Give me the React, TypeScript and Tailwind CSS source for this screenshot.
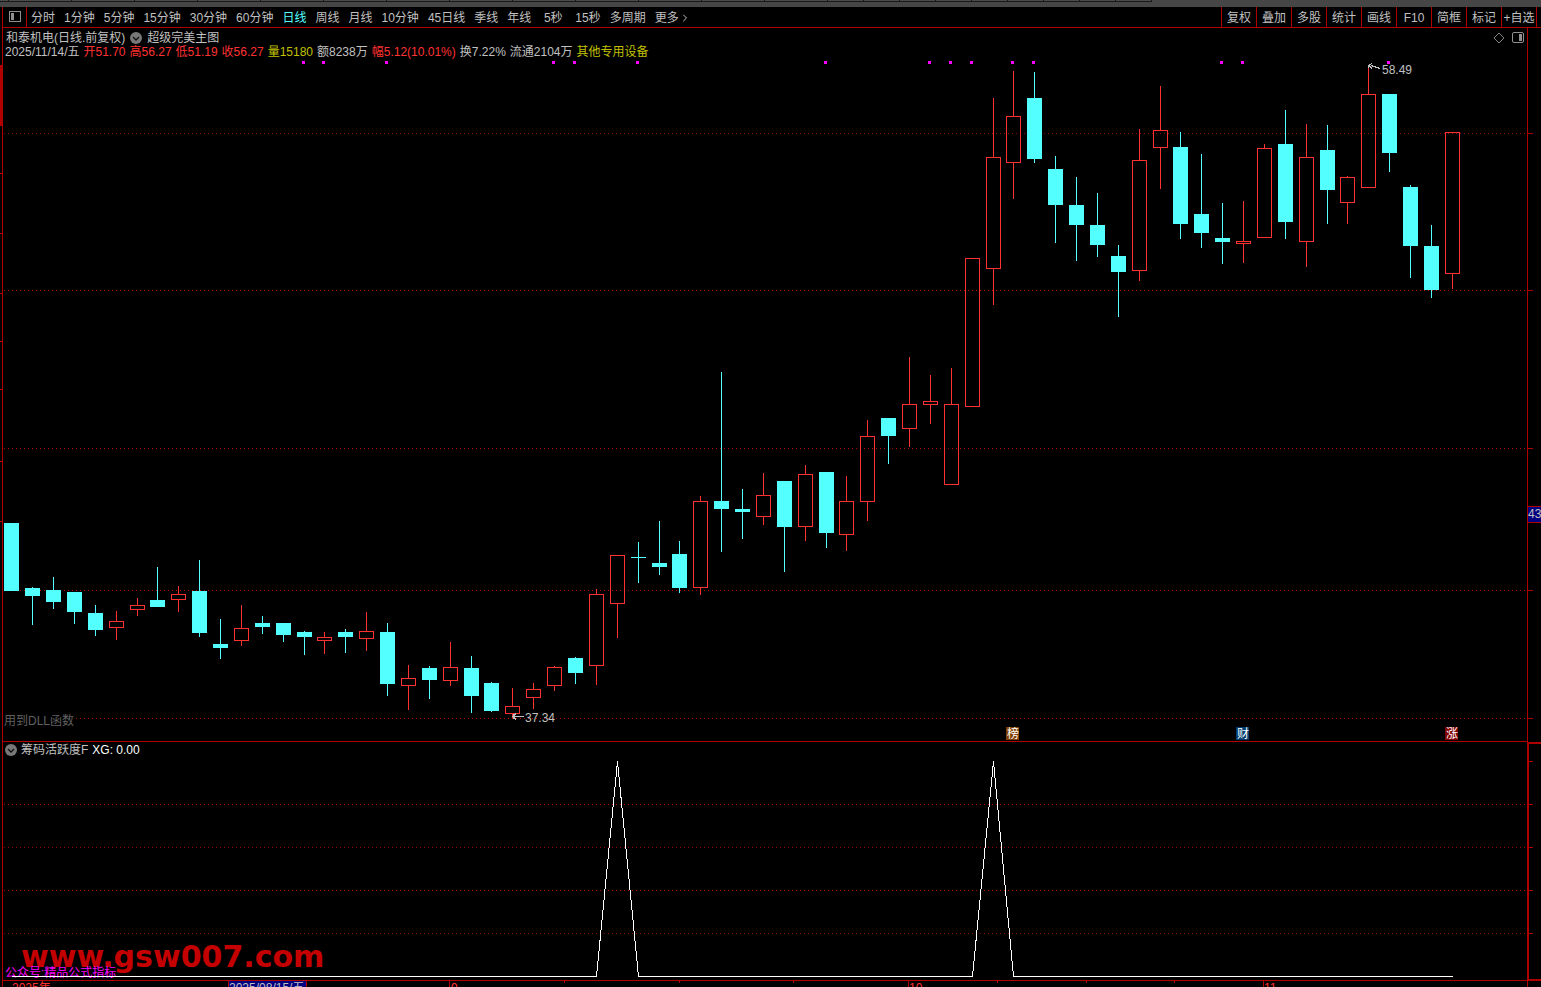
import { ChevronRight } from 'lucide-react'

type Candle = [high: number, top: number, bottom: number, low: number, up?: 1]

// pixel rows of every daily bar, 1 at the end marks a rising (hollow) bar
const CANDLES: Candle[] = [
  [523, 523, 591, 591],
  [587, 588, 596, 625],
  [577, 590, 602, 609],
  [592, 592, 612, 624],
  [605, 613, 630, 636],
  [611, 621, 628, 640, 1],
  [598, 605, 610, 616, 1],
  [567, 600, 607, 607],
  [586, 594, 600, 612, 1],
  [560, 591, 633, 637],
  [619, 644, 648, 659],
  [605, 628, 641, 646, 1],
  [616, 623, 627, 634],
  [623, 623, 635, 642],
  [631, 632, 637, 655],
  [632, 637, 641, 654, 1],
  [629, 632, 637, 653],
  [612, 631, 639, 651, 1],
  [623, 632, 684, 696],
  [665, 678, 686, 710, 1],
  [666, 668, 680, 699],
  [642, 667, 681, 686, 1],
  [656, 668, 696, 713],
  [682, 683, 711, 712],
  [688, 706, 714, 718, 1],
  [683, 689, 698, 709, 1],
  [666, 667, 686, 691, 1],
  [657, 658, 673, 684],
  [589, 594, 666, 685, 1],
  [555, 555, 604, 638, 1],
  [542, 557, 558, 583],
  [521, 563, 567, 575],
  [541, 554, 588, 593],
  [496, 501, 588, 595, 1],
  [372, 501, 509, 552],
  [489, 509, 512, 539],
  [473, 495, 517, 525, 1],
  [481, 481, 527, 572],
  [465, 474, 527, 541, 1],
  [472, 472, 533, 548],
  [476, 501, 535, 551, 1],
  [420, 436, 502, 521, 1],
  [418, 418, 436, 464],
  [357, 404, 429, 447, 1],
  [375, 401, 405, 424, 1],
  [368, 404, 485, 485, 1],
  [258, 258, 407, 407, 1],
  [98, 157, 269, 305, 1],
  [71, 116, 163, 199, 1],
  [72, 98, 159, 163],
  [156, 169, 205, 243],
  [177, 205, 225, 261],
  [193, 225, 245, 257],
  [245, 256, 272, 317],
  [129, 160, 271, 281, 1],
  [86, 130, 148, 189, 1],
  [132, 147, 224, 239],
  [154, 214, 233, 248],
  [203, 238, 242, 264],
  [201, 241, 244, 263, 1],
  [144, 148, 238, 238, 1],
  [110, 144, 222, 239],
  [124, 157, 242, 267, 1],
  [125, 150, 190, 224],
  [176, 177, 203, 224, 1],
  [67, 94, 188, 188, 1],
  [94, 94, 153, 172],
  [185, 187, 246, 278],
  [225, 246, 290, 298],
  [132, 132, 274, 289, 1],
]

const SIGNALS = [14, 15, 18, 26, 27, 30, 39, 44, 45, 46, 48, 49, 58, 59, 66]

const PERIODS = [
  '分时', '1分钟', '5分钟', '15分钟', '30分钟', '60分钟', '日线', '周线', '月线',
  '10分钟', '45日线', '季线', '年线', '5秒', '15秒', '多周期',
]

const TOOLS = ['复权', '叠加', '多股', '统计', '画线', 'F10', '简框', '标记', '+自选']

const QUOTES = [
  { text: '2025/11/14/五', color: 'text-[#c0c0c0]' },
  { text: '开51.70', color: 'text-[#ff3232]' },
  { text: '高56.27', color: 'text-[#ff3232]' },
  { text: '低51.19', color: 'text-[#ff3232]' },
  { text: '收56.27', color: 'text-[#ff3232]' },
  { text: '量15180', color: 'text-[#c0c000]' },
  { text: '额8238万', color: 'text-[#c0c0c0]' },
  { text: '幅5.12(10.01%)', color: 'text-[#ff3232]' },
  { text: '换7.22%', color: 'text-[#c0c0c0]' },
  { text: '流通2104万', color: 'text-[#c0c0c0]' },
  { text: '其他专用设备', color: 'text-[#c0c000]' },
]

const EVENTS = [
  { x: 1006, label: '榜', fill: '#804000' },
  { x: 1236, label: '财', fill: '#003c70' },
  { x: 1445, label: '涨', fill: '#800000' },
]

const MONTHS = [
  { x: 12, label: '2025年' },
  { x: 451, label: '9' },
  { x: 909, label: '10' },
  { x: 1264, label: '11' },
]

const TOP_TABS = [9, ...Array(13).fill(63), ...Array(9).fill(36)]

const RED = '#b00000'

const barX = (i: number) => Math.floor(11.82 + i * 20.877)

function TopStrip() {
  return (
    <div className="flex h-[7px] shrink-0 overflow-hidden bg-[#464646]">
      {TOP_TABS.map((w, i) => (
        <span
          key={i}
          className="h-[2px] shrink-0 border-r border-b border-[#181818] bg-[#4c4c4c]"
          style={{ width: w }}
        />
      ))}
    </div>
  )
}

function Toolbar() {
  return (
    <nav className="ml-[2px] flex h-[21px] shrink-0 items-stretch border-b border-l border-[#b00000]">
      <button aria-label="侧栏" className="flex w-[23px] shrink-0 items-center justify-center">
        <svg width="12" height="12" viewBox="0 0 12 12" shapeRendering="crispEdges">
          <rect x="0.5" y="0.5" width="11" height="10" rx="1" fill="none" stroke="#909090" />
          <rect x="2" y="2" width="3" height="7" fill="#909090" />
        </svg>
      </button>
      <div className="flex grow items-center gap-[9px] border-l border-[#b00000] pt-px pl-1 whitespace-nowrap">
        {PERIODS.map((p) => (
          <button
            key={p}
            className={`${p === '日线' ? 'text-[#54ffff]' : ''} ${p === '5秒' ? 'min-w-[26px]' : ''}`}
          >
            {p}
          </button>
        ))}
        <button className="flex items-center">
          更多
          <ChevronRight size={12} strokeWidth={2} />
        </button>
      </div>
      <div className="mr-1 flex shrink-0 border-r border-[#b00000]">
        {TOOLS.map((t) => (
          <button
            key={t}
            className="w-[35px] border-l border-[#b00000] pt-px text-center whitespace-nowrap"
          >
            {t}
          </button>
        ))}
      </div>
    </nav>
  )
}

function CollapseIcon() {
  return (
    <svg width="12" height="12" viewBox="0 0 12 12">
      <circle cx="6" cy="6" r="6" fill="#787878" />
      <path d="M3 5l3 3 3-3" fill="none" stroke="#101010" strokeWidth="1.3" />
    </svg>
  )
}

function QuoteHeader() {
  return (
    <header className="mr-[13px] ml-[2px] flex h-[30px] shrink-0 items-start justify-between border-x border-[#b00000] pt-[3px] pr-[3px] pl-[2px]">
      <div className="leading-[14px] whitespace-nowrap">
        <div className="flex items-center gap-[5px] pl-px">
          <h1>和泰机电(日线.前复权)</h1>
          <button aria-label="切换主图">
            <CollapseIcon />
          </button>
          <span>超级完美主图</span>
        </div>
        <div className="flex gap-1">
          {QUOTES.map((q) => (
            <span key={q.text} className={q.color}>
              {q.text}
            </span>
          ))}
        </div>
      </div>
      <div className="flex h-[14px] items-center gap-[7px]">
        <svg width="12" height="12" viewBox="0 0 12 12">
          <path d="M6 1l5 5-5 5-5-5z" fill="none" stroke="#808080" />
        </svg>
        <svg width="12" height="12" viewBox="0 0 12 12">
          <rect x="0.5" y="0.5" width="11" height="10" rx="1.5" fill="none" stroke="#909090" />
          <rect x="7" y="2" width="3" height="7" fill="#909090" />
        </svg>
      </div>
    </header>
  )
}

function GridLine({ y, color = RED }: { y: number; color?: string }) {
  return (
    <g stroke={color}>
      <line x1="4" x2="1527" y1={y + 0.5} y2={y + 0.5} strokeDasharray="1 3" />
      <line x1="1528" x2="1533" y1={y + 0.5} y2={y + 0.5} stroke={RED} />
    </g>
  )
}

function CandleBar({ x, candle }: { x: number; candle: Candle }) {
  const [high, top, bottom, low, up] = candle
  const color = up ? '#ff3232' : '#54ffff'
  return (
    <g fill={color}>
      {top > high && <rect x={x} y={high} width="1" height={top - high} />}
      {low > bottom && <rect x={x} y={bottom} width="1" height={low - bottom} />}
      {up ? (
        <rect
          x={x - 6.5}
          y={top + 0.5}
          width="14"
          height={bottom - top - 1}
          fill="none"
          stroke={color}
        />
      ) : (
        <rect x={x - 7} y={top} width="15" height={bottom - top} />
      )}
    </g>
  )
}

function PriceChart() {
  return (
    <svg viewBox="0 58 1541 684" className="block w-full shrink-0" shapeRendering="crispEdges">
      <g fill={RED}>
        <rect x="2" y="58" width="1" height="684" />
        <rect x="0" y="65" width="3" height="61" />
        {[173, 233, 293, 341, 389, 461, 521].map((y) => (
          <rect key={y} x="0" y={y} width="2" height="1" />
        ))}
        <rect x="1527" y="58" width="1" height="684" />
        <rect x="2" y="741" width="1526" height="1" />
      </g>
      <GridLine y={133} color="#900000" />
      {[290, 448, 590, 718].map((y) => (
        <GridLine key={y} y={y} />
      ))}

      <rect x="0" y="713" width="75" height="14" fill="#000" />
      <rect x="2" y="713" width="1" height="14" fill={RED} />
      <text x="4" y="725" fill="#606060">
        用到DLL函数
      </text>

      {CANDLES.map((c, i) => (
        <CandleBar key={i} x={barX(i)} candle={c} />
      ))}
      {SIGNALS.map((i) => (
        <rect key={i} x={barX(i) - 2} y="61" width="3" height="3" fill="#ff00ff" />
      ))}

      <g fill="none" stroke="#c0c0c0">
        <path d="M1368.5 68V65.5L1372 63.5M1369 65.5l3 3M1371 65.5l9 3" />
        <path d="M512 716.5h12M516 713.5l-3 3 3 3M513.5 714v5" />
      </g>
      <g fill="#c0c0c0">
        <text x="1382" y="74">58.49</text>
        <text x="525" y="722">37.34</text>
      </g>

      {EVENTS.map((e) => (
        <g key={e.label}>
          <rect x={e.x} y="727" width="13" height="13" fill={e.fill} />
          <text x={e.x + 1} y="738" fill="#fff">
            {e.label}
          </text>
        </g>
      ))}

      <rect x="1528" y="506" width="13" height="17" fill={RED} />
      <rect x="1528" y="507" width="13" height="15" fill="#000080" />
      <text x="1528" y="518" fill="#c0c0c0">43</text>
    </svg>
  )
}

function IndicatorHeader() {
  return (
    <div className="ml-[2px] flex h-4 shrink-0 border-l border-[#b00000]">
      <div className="flex grow items-center gap-1 pl-[2px]">
        <button aria-label="切换指标">
          <CollapseIcon />
        </button>
        <h2>筹码活跃度F</h2>
        <span className="text-white">XG: 0.00</span>
      </div>
      <div className="w-[14px] border-t-2 border-l-2 border-[#b00000]" />
    </div>
  )
}

function IndicatorChart() {
  const base = 976.5
  const peak = 761.5
  const points = [0, 28, 29, 30, 46, 47, 48, 69]
    .map((i) => `${barX(i) + 0.5},${i === 29 || i === 47 ? peak : base}`)
    .join(' ')

  return (
    <svg viewBox="0 758 1541 240" className="block w-full shrink-0" shapeRendering="crispEdges">
      <g fill={RED}>
        <rect x="2" y="758" width="1" height="240" />
        <rect x="1527" y="758" width="2" height="223" />
        <rect x="1529" y="761" width="4" height="1" />
        <rect x="2" y="980" width="1539" height="1" />
        <rect x="1527" y="979" width="14" height="2" />
        {[228, 306, 449, 908, 1263, 1527].map((x) => (
          <rect key={x} x={x} y="981" width="1" height="17" />
        ))}
        {[564, 679, 793, 997, 1086, 1174].map((x) => (
          <rect key={x} x={x} y="981" width="1" height="2" />
        ))}
      </g>
      <GridLine y={804} />
      <GridLine y={847} color="#900000" />
      <GridLine y={890} />
      <GridLine y={933} color="#900000" />

      <text x="21" y="967" fill="#c40000" className="font-['DejaVu_Sans'] text-[30px] font-bold">
        www.gsw007.com
      </text>
      <text x="5" y="977" fill="#ff00ff">
        公众号:精品公式指标
      </text>
      <polyline points={points} fill="none" stroke="#fff" />

      {MONTHS.map((m) => (
        <text key={m.x} x={m.x} y="992" fill="#ff3232">
          {m.label}
        </text>
      ))}
      <rect x="229" y="981" width="77" height="17" fill="#000080" />
      <text x="229" y="992" fill="#c0c0c0">
        2025/08/15/五
      </text>
    </svg>
  )
}

export default function App() {
  return (
    <main className="flex h-screen flex-col overflow-hidden bg-black font-['Liberation_Sans','Noto_Sans_CJK_SC',sans-serif] text-xs text-[#c0c0c0]">
      <TopStrip />
      <Toolbar />
      <QuoteHeader />
      <PriceChart />
      <IndicatorHeader />
      <IndicatorChart />
    </main>
  )
}
